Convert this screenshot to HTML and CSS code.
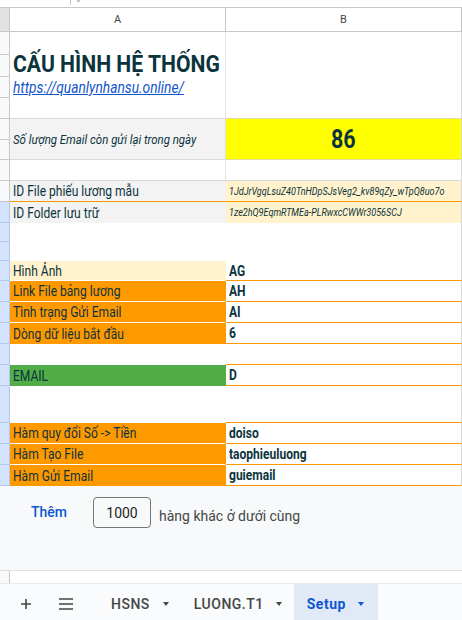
FILE: index.html
```html
<!DOCTYPE html>
<html lang="vi">
<head>
<meta charset="utf-8">
<title>Setup</title>
<link rel="stylesheet" href="styles.css">
</head>
<body>
<div class="topstrip"><span class="tick"></span><span class="tick2"></span></div>

<div class="sheet">
  <div class="row hdr">
    <div class="rh corner"></div>
    <div class="a colh">A</div>
    <div class="b colh">B</div>
  </div>

  <div class="row h87">
    <div class="rh"><div class="s s23"></div><div class="s s22"></div><div class="s s21"></div></div>
    <div class="a title-cell gl-r bb-g">
      <span class="c title">CẤU HÌNH HỆ THỐNG</span>
      <span class="c link">https://quanlynhansu.online/</span>
    </div>
    <div class="b bb-y"></div>
  </div>

  <div class="row h41">
    <div class="rh"><div class="s s21"></div></div>
    <div class="a bg-gray gl-r bb-g"><span class="c ital">Số lượng Email còn gửi lại trong ngày</span></div>
    <div class="b bg-yellow center bb-y"><span class="c big">86</span></div>
  </div>

  <div class="row h21">
    <div class="rh"></div>
    <div class="a gl-r bb-g"></div>
    <div class="b bb-g"></div>
  </div>

  <div class="row h21">
    <div class="rh"></div>
    <div class="a bg-gray bb-o"><span class="c lbl">ID File phiếu lương mẫu</span></div>
    <div class="b bg-lt bb-o"><span class="c id">1JdJrVgqLsuZ40TnHDpSJsVeg2_kv89qZy_wTpQ8uo7o</span></div>
  </div>

  <div class="row h21">
    <div class="rh sel"></div>
    <div class="a bg-gray"><span class="c lbl">ID Folder lưu trữ</span></div>
    <div class="b bg-lt"><span class="c id">1ze2hQ9EqmRTMEa-PLRwxcCWWr3056SCJ</span></div>
  </div>

  <div class="row h38">
    <div class="rh sel"><div class="s s19"></div></div>
    <div class="a"></div>
    <div class="b"></div>
  </div>

  <div class="row h20">
    <div class="rh sel"></div>
    <div class="a bg-lt bb-w"><span class="c lbl">Hình Ảnh</span></div>
    <div class="b bb-o"><span class="c val">AG</span></div>
  </div>

  <div class="row h21">
    <div class="rh sel"></div>
    <div class="a bg-or bb-w"><span class="c lbl">Link File bảng lương</span></div>
    <div class="b bb-o"><span class="c val">AH</span></div>
  </div>

  <div class="row h21">
    <div class="rh sel"></div>
    <div class="a bg-or bb-w"><span class="c lbl">Tình trạng Gửi Email</span></div>
    <div class="b bb-o"><span class="c val">AI</span></div>
  </div>

  <div class="row h21">
    <div class="rh sel"></div>
    <div class="a bg-or"><span class="c lbl">Dòng dữ liệu bắt đầu</span></div>
    <div class="b bb-o"><span class="c val">6</span></div>
  </div>

  <div class="row h21">
    <div class="rh sel"></div>
    <div class="a"></div>
    <div class="b bb-o"></div>
  </div>

  <div class="row h21">
    <div class="rh sel"></div>
    <div class="a bg-green"><span class="c lbl">EMAIL</span></div>
    <div class="b bb-o"><span class="c val">D</span></div>
  </div>

  <div class="row h37">
    <div class="rh sel"></div>
    <div class="a"></div>
    <div class="b bb-o"></div>
  </div>

  <div class="row h21">
    <div class="rh sel"></div>
    <div class="a bg-or bb-w"><span class="c lbl">Hàm quy đổi Số -&gt; Tiền</span></div>
    <div class="b bb-o"><span class="c val">doiso</span></div>
  </div>

  <div class="row h21">
    <div class="rh sel"></div>
    <div class="a bg-or bb-w"><span class="c lbl">Hàm Tạo File</span></div>
    <div class="b bb-o"><span class="c val">taophieuluong</span></div>
  </div>

  <div class="row h21">
    <div class="rh sel"></div>
    <div class="a bg-or"><span class="c lbl">Hàm Gửi Email</span></div>
    <div class="b bb-o"><span class="c val">guiemail</span></div>
  </div>
</div>

<div class="more">
  <span class="add">Thêm</span>
  <span class="count">1000</span>
  <span class="rest">hàng khác ở dưới cùng</span>
</div>

<div class="tail"><div class="rh tail-rh"></div></div>

<div class="tabbar">
  <span class="tb-plus">
    <svg width="10" height="10" viewBox="0 0 10 10"><path d="M5 0v10M0 5h10" stroke="#444746" stroke-width="1.6" fill="none"/></svg>
  </span>
  <span class="tb-menu">
    <svg width="14" height="12" viewBox="0 0 14 12"><path d="M0 1h14M0 6h14M0 11h14" stroke="#444746" stroke-width="1.5" fill="none"/></svg>
  </span>
  <span class="tab tab-hsns"><span class="tab-name">HSNS</span><span class="caret"></span></span>
  <span class="tab tab-luong"><span class="tab-name">LUONG.T1</span><span class="caret"></span></span>
  <span class="tab tab-active"><span class="tab-name">Setup</span><span class="caret"></span></span>
</div>
</body>
</html>
```

FILE: styles.css
```css
html, body {
  margin: 0;
  padding: 0;
  overflow: hidden;
}
body {
  width: 462px;
  height: 620px;
  background: #ffffff;
  font-family: Roboto, "Noto Sans", "Liberation Sans", sans-serif;
  color: #0c343d;
}

/* top strip remnant */
.topstrip {
  height: 7px;
  display: flex;
  align-items: flex-start;
  padding-left: 70px;
  gap: 6px;
  box-sizing: border-box;
}
.tick { width: 1px; height: 5px; background: #c4c4c4; }
.tick2 { width: 3px; height: 2px; background: #c4c4c4; }

/* sheet grid */
.sheet { display: flex; flex-direction: column; }
.row { display: flex; flex: none; }
.h87 { height: 87px; }
.h41 { height: 41px; }
.h38 { height: 38px; }
.h37 { height: 37px; }
.h21 { height: 21px; }
.h20 { height: 20px; }

.rh {
  width: 10px;
  flex: none;
  box-sizing: border-box;
  background: #f8f9fa;
  border-right: 1px solid #c7c7c7;
  border-bottom: 1px solid #c7c7c7;
  display: flex;
  flex-direction: column;
}
.rh .s { flex: none; box-sizing: border-box; border-bottom: 1px solid #c7c7c7; }
.s23 { height: 23px; }
.s22 { height: 22px; }
.s21 { height: 21px; }
.s19 { height: 19px; }
.rh.sel { background: #d3e3fd; border-color: #b6c8ea; }
.rh.sel .s { border-color: #b6c8ea; }

.a, .b {
  flex: none;
  box-sizing: border-box;
  display: flex;
  align-items: center;
  padding-left: 3px;
  white-space: nowrap;
}
.a { width: 216px; }
.b { width: 236px; border-right: 1px solid #d6d6d6; }

/* column header */
.hdr { height: 25px; }
.hdr > div {
  border-top: 1px solid #c7c7c7;
  border-bottom: 1px solid #c7c7c7;
}
.corner { background: #e1e1e1; }
.colh {
  justify-content: center;
  padding-left: 0;
  font-size: 11px;
  color: #444746;
  background: #ffffff;
}
.hdr .a { border-right: 1px solid #c7c7c7; }
.hdr .b { border-right: 1px solid #c7c7c7; }

/* borders & fills */
.gl-r { border-right: 1px solid #e2e2e2; }
.bb-g { border-bottom: 1px solid #dadada; }
.bb-y { border-bottom: 1px solid #dedea0; }
.bb-o { border-bottom: 1px solid #ff9900; }
.bb-w { border-bottom: 1px solid #ffffff; }
.bg-gray { background: #f3f3f3; }
.bg-yellow { background: #ffff00; }
.bg-lt { background: #fff2cc; }
.bg-or { background: #ff9900; }
.bg-green { background: #51ad47; }
.center { justify-content: center; padding-left: 0; }

/* condensed text emulation */
.c {
  display: inline-block;
  transform: scaleX(0.86);
  transform-origin: 0 50%;
  white-space: nowrap;
}
.center .c { transform-origin: 50% 50%; }

.title-cell {
  flex-direction: column;
  align-items: flex-start;
  justify-content: center;
}
.title {
  font-size: 23px;
  font-weight: 700;
  line-height: 24px;
  margin-bottom: 2px;
  transform: scaleX(0.92);
  color: #0c343d;
}
.link {
  font-size: 16px;
  font-style: italic;
  line-height: 18px;
  color: #1155cc;
  text-decoration: underline;
}
.ital { font-size: 13.3px; font-style: italic; }
.big { font-size: 25px; font-weight: 700; }
.lbl { font-size: 14px; }
.val { font-size: 14px; font-weight: 700; }
.id { font-size: 10.5px; font-style: italic; }

/* add rows area */
.more {
  height: 85px;
  box-sizing: border-box;
  background: #f8f9fa;
  border-bottom: 1px solid #e0e0e0;
  display: flex;
  align-items: flex-start;
  padding: 11px 0 0 31px;
}
.add {
  height: 31px;
  line-height: 31px;
  font-size: 14px;
  font-weight: 500;
  color: #0b57d0;
  margin-right: 26px;
}
.count {
  width: 58px;
  height: 31px;
  box-sizing: border-box;
  border: 1px solid #747775;
  border-radius: 4px;
  display: flex;
  align-items: center;
  justify-content: center;
  font-size: 14px;
  color: #1f1f1f;
  margin-right: 8px;
}
.rest {
  height: 31px;
  line-height: 31px;
  padding-top: 4px;
  font-size: 14px;
  color: #444746;
}

.tail { height: 12px; display: flex; }
.tail-rh { border-bottom: none; background: #f8f9fa; }

/* sheet tabs */
.tabbar {
  height: 37px;
  box-sizing: border-box;
  background: #f9fbfd;
  border-top: 1px solid #e8eaed;
  display: flex;
  align-items: stretch;
  color: #444746;
  font-size: 14px;
  font-weight: 500;
}
.tb-plus, .tb-menu {
  display: flex;
  align-items: center;
  justify-content: center;
  padding-top: 3px;
}
.tb-plus { width: 20px; margin-left: 16px; }
.tb-menu { width: 14px; margin-left: 23px; }
.tab {
  display: flex;
  align-items: center;
  padding-top: 3px;
  box-sizing: border-box;
}
.tab-name { letter-spacing: 0.5px; }
.caret {
  width: 0;
  height: 0;
  border-left: 3.5px solid transparent;
  border-right: 3.5px solid transparent;
  border-top: 4px solid #444746;
}
.tab-hsns { margin-left: 38px; }
.tab-hsns .caret { margin-left: 13px; }
.tab-luong { margin-left: 25px; }
.tab-luong .caret { margin-left: 12px; }
.tab-active {
  margin-left: 12px;
  width: 84px;
  padding-left: 13px;
  background: #e1e9f7;
  color: #0b57d0;
  font-weight: 700;
}
.tab-active .caret { margin-left: 12px; border-top-color: #0b57d0; }
```
